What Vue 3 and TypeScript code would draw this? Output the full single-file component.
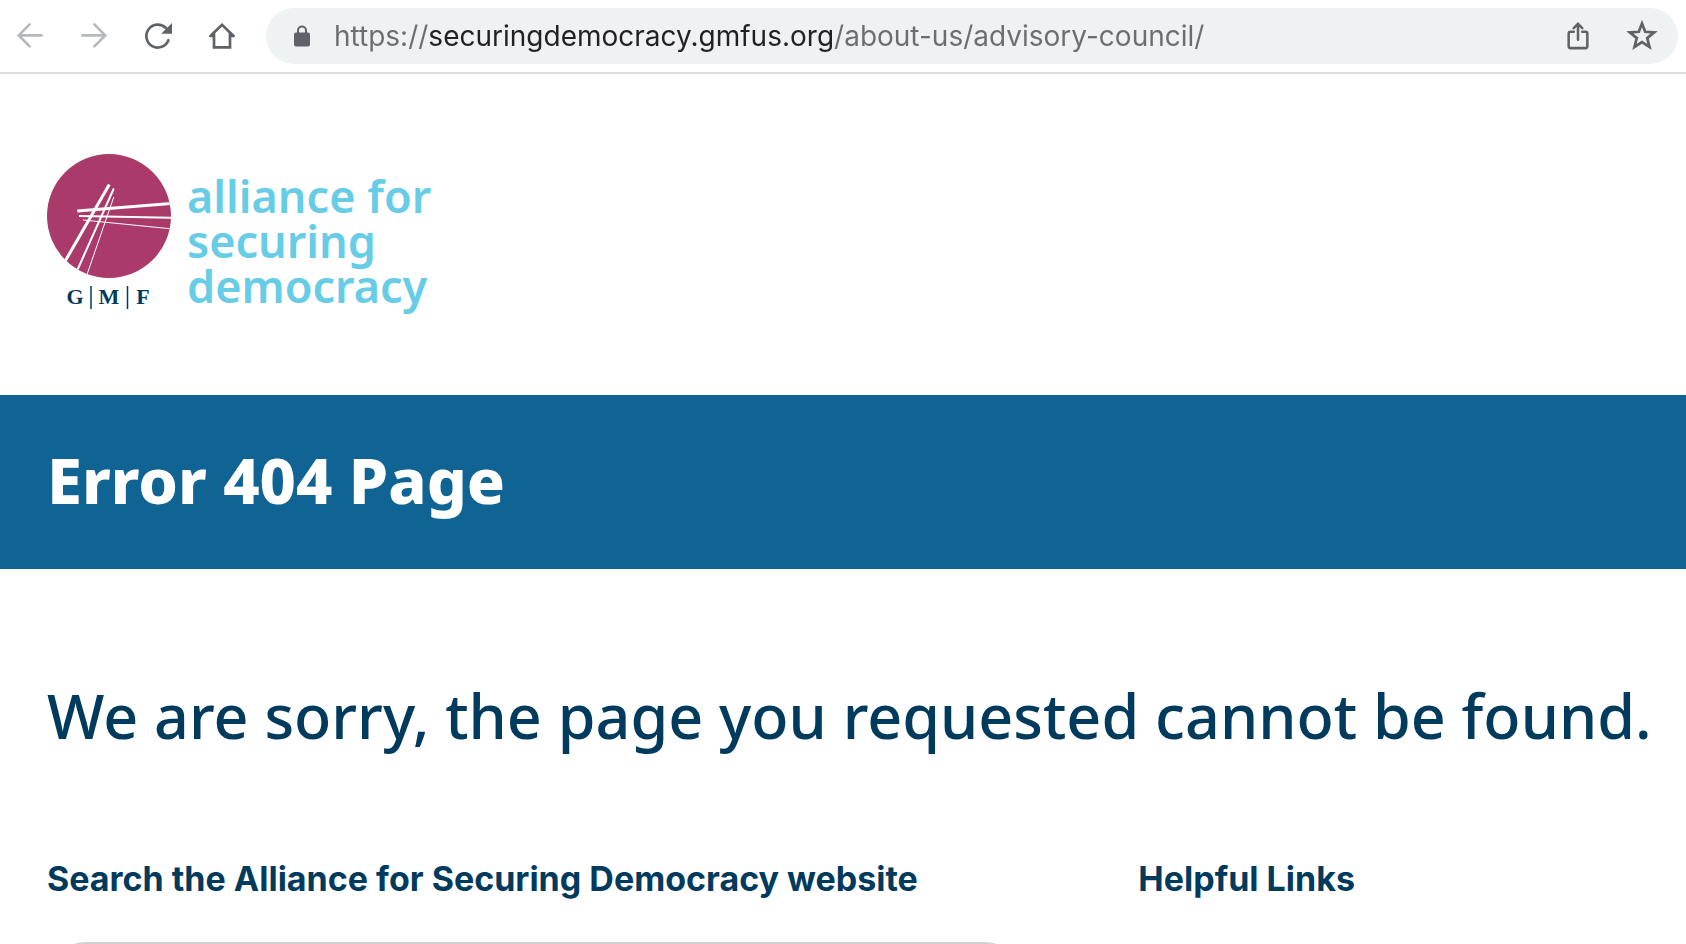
<script setup lang="ts">
import { ref } from 'vue'

const address = ref('https://securingdemocracy.gmfus.org/about-us/advisory-council/')
const query = ref('')
</script>

<template>
  <div class="window">
    <nav class="toolbar" aria-label="Browser toolbar">
      <div class="nav-buttons">
        <button class="icon-button faded" type="button" aria-label="Back" disabled>
          <svg viewBox="0 0 28 28"><path d="M13.6 2.4 2.8 13.4l10.8 11M3 13.4h22.6" /></svg>
        </button>
        <button class="icon-button faded" type="button" aria-label="Forward" disabled>
          <svg viewBox="0 0 28 28"><path d="M14.4 2.4l10.8 11-10.8 11M25 13.4H2.4" /></svg>
        </button>
        <button class="icon-button" type="button" aria-label="Reload">
          <svg viewBox="0 0 28 28">
            <path d="M24.4 18.2A11.4 11.4 0 1 1 21.8 6" />
            <path class="solid" d="M28 1v10.8H17.2z" />
          </svg>
        </button>
        <button class="icon-button" type="button" aria-label="Home">
          <svg viewBox="0 0 28 28"><path d="M2.4 14 14 2.8 25.6 14M6 11v14.4h16V11M2.4 14H6M22 14h3.6" /></svg>
        </button>
      </div>
      <div class="address-bar">
        <svg class="lock" viewBox="0 0 16 22" aria-hidden="true">
          <path d="M4 8.500V5.500a4 4 0 0 1 8 0V8.500" />
          <rect x="0" y="7.500" width="16" height="14" rx="2" />
        </svg>
        <input v-model="address" class="address" type="text" aria-label="Address" spellcheck="false" />
        <button class="icon-button" type="button" aria-label="Share">
          <svg viewBox="0 0 28 30">
            <path d="M9.500 10.500H6a2 2 0 0 0-2 2V26a2 2 0 0 0 2 2h16a2 2 0 0 0 2-2V12.500a2 2 0 0 0-2-2h-3.500M14 19V3M9.400 6.600 14 2l4.600 4.600" />
          </svg>
        </button>
        <button class="icon-button" type="button" aria-label="Bookmark this page">
          <svg class="star" viewBox="0 0 28 28">
            <path d="M14 1.500l3.200 8.300 9 .6-7 5.700 2.300 8.800L14 20l-7.500 4.900 2.300-8.800-7-5.700 9-.6z" />
          </svg>
        </button>
      </div>
    </nav>

    <header class="site-header">
      <a class="brand" href="#" aria-label="Alliance for Securing Democracy home">
        <svg class="emblem" viewBox="0 0 124 156" aria-hidden="true">
          <defs>
            <clipPath id="disc"><circle cx="62" cy="62" r="62" /></clipPath>
          </defs>
          <circle cx="62" cy="62" r="62" fill="#aa3a69" />
          <g clip-path="url(#disc)" stroke="#fff" fill="none">
            <path stroke-width="3" d="M62.300 30.500 16.500 110" />
            <path stroke-width="2" d="M66.800 34.500 29.500 118" />
            <path stroke-width="1" d="M66.800 43 39.500 122" />
            <path stroke-width="3" d="M30.300 57 125 49.500" />
            <path stroke-width="2" d="M32 62 125 63.700" />
            <path stroke-width="1" d="M36 66 124 74.800" />
          </g>
          <path stroke="#003a5d" stroke-width="1.500" d="M44 132v23M80.500 132v23" />
          <g class="initials" text-anchor="middle">
            <text x="28" y="150">G</text>
            <text x="62" y="150">M</text>
            <text x="96" y="150">F</text>
          </g>
        </svg>
        <span class="wordmark">alliance for<br />securing<br />democracy</span>
      </a>
    </header>

    <section class="banner">
      <h1>Error 404 Page</h1>
    </section>

    <main class="content">
      <h2>We are sorry, the page you requested cannot be found.</h2>
      <div class="columns">
        <form class="search" role="search" @submit.prevent>
          <label for="site-search">Search the Alliance for Securing Democracy website</label>
          <input id="site-search" v-model="query" type="search" />
        </form>
        <section class="links">
          <h3>Helpful Links</h3>
        </section>
      </div>
    </main>
  </div>
</template>

<style>
body {
  margin: 0;
  background: #fff;
}
</style>

<style scoped>
.window {
  height: 100vh;
  overflow: hidden;
  display: flex;
  flex-direction: column;
  color: #003a5d;
  font-family: "Noto Sans", sans-serif;
}

.window > * {
  flex-shrink: 0;
}

.toolbar {
  display: flex;
  align-items: center;
  gap: 30px;
  padding: 8px 8px 8px 16px;
  border-bottom: 2px solid #dadcde;
}

.nav-buttons {
  display: flex;
  gap: 36px;
}

.icon-button {
  display: flex;
  flex: none;
  width: 28px;
  height: 28px;
  padding: 0;
  border: 0;
  background: none;
  color: #5f6368;
}

.icon-button svg {
  width: 100%;
  height: 100%;
  overflow: visible;
  fill: none;
  stroke: currentColor;
  stroke-width: 2.7;
  stroke-linecap: round;
}

.icon-button .solid {
  fill: currentColor;
  stroke: none;
}

.faded {
  color: #b6babd;
}

.address-bar {
  flex: 1;
  display: flex;
  align-items: center;
  gap: 36px;
  height: 56px;
  padding: 0 22px 0 28px;
  box-sizing: border-box;
  border-radius: 28px;
  background: #eef2f3;
}

.lock {
  flex: none;
  width: 16px;
  height: 22px;
  margin-right: -12px;
  fill: #5f6368;
}

.lock path {
  fill: none;
  stroke: #5f6368;
  stroke-width: 2;
}

/* The host part of the address is darker than its scheme and path. */
.address {
  flex: 1;
  min-width: 0;
  height: 40px;
  padding: 0;
  border: 0;
  outline: 0;
  font: 400 28px/40px "Inter", sans-serif;
  color: transparent;
  caret-color: #202124;
  background: linear-gradient(90deg, #6b6d70 95px, #202124 95px 500px, #6b6d70 500px);
  background-clip: text;
  -webkit-background-clip: text;
}

.site-header {
  padding: 80px 47px 85px;
}

.brand {
  display: inline-flex;
  align-items: flex-start;
  gap: 16px;
  vertical-align: top;
  text-decoration: none;
}

.emblem {
  width: 124px;
  height: 156px;
}

.initials {
  fill: #003a5d;
  font: 700 22px "Liberation Serif", serif;
}

.wordmark {
  padding-top: 19px;
  color: #67cce6;
  font-size: 45px;
  font-weight: 600;
  line-height: 45px;
}

.banner {
  padding: 40px 47px 44px;
  background: #106493;
  color: #fff;
}

.banner h1 {
  margin: 0;
  font: 800 63px/90px "Noto Sans", sans-serif;
}

.content {
  padding: 102px 16px 0 47px;
}

.content h2 {
  margin: 0;
  font: 500 61px/90px "Noto Sans", sans-serif;
  white-space: nowrap;
}

.columns {
  display: grid;
  grid-template-columns: 978fr 532fr;
  gap: 114px;
  padding-top: 93px;
}

.search label,
.links h3 {
  display: block;
  margin: 0;
  font: 700 34px/50px "Inter", sans-serif;
}

.search input {
  display: block;
  width: 100%;
  height: 80px;
  margin-top: 38px;
  padding: 0 32px;
  box-sizing: border-box;
  border: 2px solid #d0d0d0;
  border-radius: 40px;
  background: #fff;
  font: 400 28px "Noto Sans", sans-serif;
  appearance: none;
}
</style>
